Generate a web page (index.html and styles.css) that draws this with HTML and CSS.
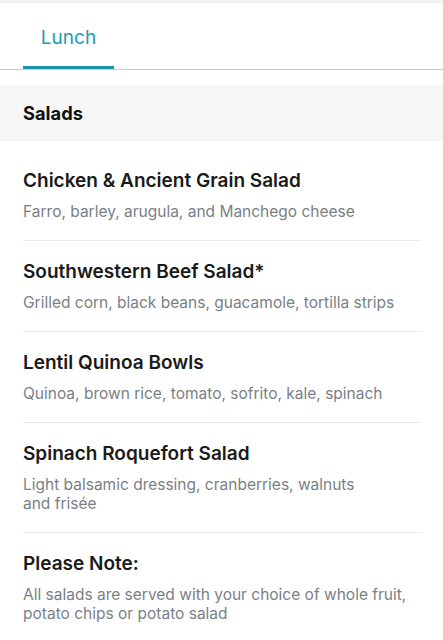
FILE: index.html
```html
<!DOCTYPE html>
<html lang="en">
<head>
<meta charset="utf-8">
<title>Lunch Menu</title>
<link rel="stylesheet" href="styles.css">
</head>
<body>
<div class="topbar"></div>
<nav class="tabs">
  <div class="tab active">Lunch</div>
</nav>
<section class="menu">
  <h2 class="section-title">Salads</h2>
  <ul class="items">
    <li class="item">
      <div class="item-inner">
        <div class="name">Chicken &amp; Ancient Grain Salad</div>
        <div class="desc">Farro, barley, arugula, and Manchego cheese</div>
      </div>
    </li>
    <li class="item">
      <div class="item-inner">
        <div class="name">Southwestern Beef Salad*</div>
        <div class="desc">Grilled corn, black beans, guacamole, tortilla strips</div>
      </div>
    </li>
    <li class="item">
      <div class="item-inner">
        <div class="name">Lentil Quinoa Bowls</div>
        <div class="desc">Quinoa, brown rice, tomato, sofrito, kale, spinach</div>
      </div>
    </li>
    <li class="item">
      <div class="item-inner">
        <div class="name">Spinach Roquefort Salad</div>
        <div class="desc">Light balsamic dressing, cranberries, walnuts<br>and frisée</div>
      </div>
    </li>
    <li class="item last">
      <div class="item-inner">
        <div class="name">Please Note:</div>
        <div class="desc">All salads are served with your choice of whole fruit, potato chips or potato salad</div>
      </div>
    </li>
  </ul>
</section>
</body>
</html>
```
FILE: styles.css
```css
html, body {
  margin: 0;
  padding: 0;
  background: #ffffff;
}
body {
  font-family: "Inter", "Lato", "Liberation Sans", sans-serif;
  color: #1c1c1c;
  -webkit-font-smoothing: antialiased;
}
.topbar {
  height: 3px;
  background: #f2f2f2;
}
.tabs {
  display: flex;
  padding-left: 23px;
  border-bottom: 1px solid #cbcbcb;
}
.tab {
  width: 91px;
  height: 66px;
  box-sizing: border-box;
  display: flex;
  justify-content: center;
  padding-top: 23px;
  font-size: 19px;
  line-height: 24px;
  color: #1b9db0;
  border-bottom: 3px solid transparent;
}
.tab.active {
  border-bottom-color: #1a94a8;
}
.menu {
  margin-top: 15px;
}
.section-title {
  margin: 0;
  height: 56px;
  display: flex;
  align-items: center;
  padding-left: 23px;
  background: #f6f6f6;
  font-size: 18.3px;
  font-weight: 700;
  color: #111;
}
.items {
  list-style: none;
  margin: 0;
  padding: 9px 0 0;
}
.item {
  padding: 0 21px 0 23px;
}
.item-inner {
  padding: 19px 0 19px;
  border-bottom: 1px solid #ececec;
}
.item.last .item-inner {
  border-bottom: none;
}
.name {
  font-size: 19px;
  line-height: 24px;
  font-weight: 600;
  color: #1a1a1a;
}
.desc {
  margin-top: 9px;
  font-size: 15.5px;
  line-height: 19px;
  color: #7a7f86;
}
```
